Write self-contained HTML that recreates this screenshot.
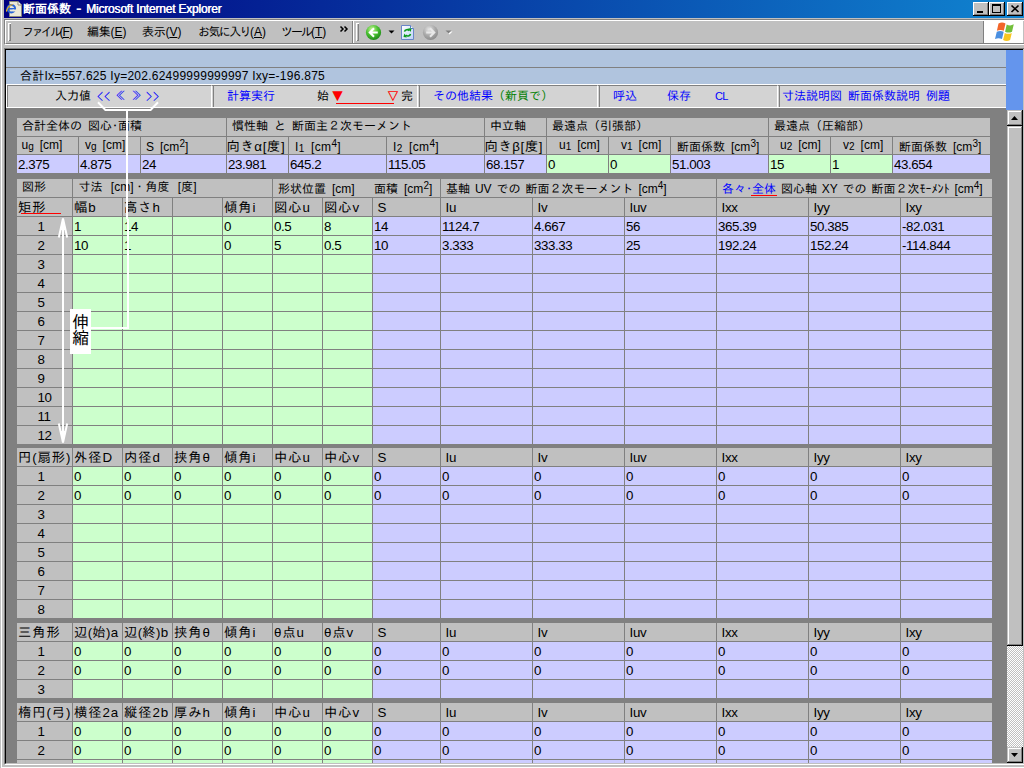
<!DOCTYPE html>
<html lang="ja">
<head>
<meta charset="utf-8">
<title>断面係数 - Microsoft Internet Explorer</title>
<style>
html,body{margin:0;padding:0;}
body{width:1024px;height:768px;overflow:hidden;position:relative;background:#c0c0c0;
 font-family:"Liberation Sans","IPAGothic",sans-serif;font-size:12px;color:#000;}
div,span{box-sizing:border-box;}
.a{position:absolute;}
/* ---- window chrome ---- */
#title{left:4px;top:0;width:1020px;height:18px;background:linear-gradient(to right,#000080 0%,#1084d0 100%);}
#title .t{position:absolute;top:2px;height:14px;line-height:14px;color:#fff;font-weight:bold;font-size:12px;white-space:nowrap;}
.wb{position:absolute;top:2px;width:16px;height:14px;background:#c0c0c0;
 box-shadow:inset -1px -1px 0 #000,inset 1px 1px 0 #fff,inset -2px -2px 0 #808080;}
#rebar{left:4px;top:19px;width:1020px;height:26px;background:#c0c0c0;border-top:1px solid #808080;border-left:1px solid #808080;border-bottom:1px solid #fff;}
#rebar .in{position:absolute;left:0;top:0;right:0;bottom:0;border-top:1px solid #fff;border-left:1px solid #fff;border-bottom:1px solid #808080;}
.grip{position:absolute;top:23px;width:3px;height:18px;background:#c0c0c0;box-shadow:inset 1px 1px 0 #fff,inset -1px -1px 0 #808080;}
.m{position:absolute;top:25px;height:14px;line-height:14px;font-size:12px;white-space:nowrap;}
.m .k{letter-spacing:-2.6px;}
.m u{text-decoration:underline;text-underline-offset:1px;text-decoration-thickness:1px;}
/* ---- page ---- */
#frame{left:4px;top:48px;width:1020px;height:717px;border-top:1px solid #808080;border-left:1px solid #808080;border-bottom:1px solid #fff;background:#c0c0c0;}
#frame2{left:5px;top:49px;width:1018px;height:715px;border-top:1px solid #000;border-left:1px solid #000;border-bottom:1px solid #c0c0c0;background:#808080;}
#doc{left:6px;top:50px;width:1017px;height:713px;overflow:hidden;background:#808080;}
/* coordinates inside #abs are page-absolute (offset compensated) */
#abs{position:absolute;left:-6px;top:-50px;width:1024px;height:768px;}
.band{position:absolute;left:6px;width:1000px;background:#b0c4de;}
.c{position:absolute;overflow:hidden;white-space:nowrap;}
.c>span{position:relative;display:block;}
/* gothic 12px cells */
.g{font-size:12px;line-height:12px;word-spacing:2.7px;}
.g>span{top:2px;}
.g.lo>span{top:4px;}
.p{font-size:13.33px;line-height:15px;}
.p>span{top:2px;}
.v{font-size:13.33px;line-height:15px;letter-spacing:-0.41px;}
.v>span{top:2px;}
.sb{font-size:10px;position:relative;top:0.5px;}
.sp{font-size:10px;position:relative;top:-4px;}
.bl{color:#00f;}
.ru{border-bottom:1px solid #f00;}
.lk{color:#00f;}
</style>
</head>
<body>
<div class="a" style="left:1px;top:0;width:1px;height:768px;background:#fff"></div>
<div class="a" style="left:1px;top:767px;width:1023px;height:1px;background:#fff"></div>
<!-- title bar -->
<div id="title" class="a">
  <svg class="a" style="left:2px;top:1px" width="16" height="16" viewBox="0 0 16 16">
    <path d="M3.500 0.500h8.500l3.500 3.500v11.500h-12z" fill="#ece9d8" stroke="#8a8a7a" stroke-width="1"/>
    <path d="M12 0.500v3.500h3.500" fill="#fff" stroke="#8a8a7a" stroke-width="1"/>
    <ellipse cx="5.300" cy="7.700" rx="3.800" ry="3.700" fill="none" stroke="#2a66d8" stroke-width="2"/>
    <rect x="2" y="7" width="7" height="1.500" fill="#2a66d8"/>
    <rect x="6.500" y="8.500" width="4" height="2" fill="#ece9d8"/>
    <path d="M0.300 10.500c1-4 4-6.500 6.500-7" fill="none" stroke="#e8b020" stroke-width="1.200"/>
  </svg>
  <div class="t" style="left:19px">断面係数</div><div class="t" style="left:72px;transform:scaleX(1.4);transform-origin:0 0">-</div><div class="t" id="tt2" style="left:82px;letter-spacing:-0.2px;font-weight:normal;text-shadow:0.5px 0 0 #fff">Microsoft Internet Explorer</div>
  <div class="wb" style="left:969px"><div class="a" style="left:4px;top:9px;width:6px;height:2px;background:#000"></div></div>
  <div class="wb" style="left:985px"><div class="a" style="left:3px;top:2px;width:9px;height:9px;border:1px solid #000;border-top-width:2px"></div></div>
  <div class="wb" style="left:1003px">
    <svg class="a" style="left:0;top:0" width="16" height="14" viewBox="0 0 16 14"><path d="M4.500 3.500l7 6.500M11.500 3.500l-7 6.500" stroke="#000" stroke-width="1.700" fill="none"/></svg>
  </div>
</div>
<!-- menu / toolbar -->
<div id="rebar" class="a"><div class="in"></div></div>
<div class="grip" style="left:8px"></div>
<div class="m" style="left:22px"><span class="k">ファイル</span><span style="letter-spacing:-1px">(<u>F</u>)</span></div>
<div class="m" style="left:87px"><span style="letter-spacing:-0.3px">編集</span>(<u>E</u>)</div>
<div class="m" style="left:142px"><span style="letter-spacing:-0.3px">表示</span>(<u>V</u>)</div>
<div class="m" style="left:198px"><span style="letter-spacing:-1.6px">お気に入り</span>(<u>A</u>)</div>
<div class="m" style="left:281px"><span class="k" style="letter-spacing:-2px">ツール</span>(<u>T</u>)</div>
<svg class="a" style="left:339px;top:25px" width="10" height="8" viewBox="0 0 10 8"><path d="M1.500 1.500l2.500 2.500l-2.500 2.500M5.500 1.500l2.500 2.500l-2.500 2.500" stroke="#000" stroke-width="1.500" fill="none"/></svg>
<div class="a" style="left:352px;top:21px;width:1px;height:22px;background:#808080"></div>
<div class="a" style="left:353px;top:21px;width:1px;height:22px;background:#fff"></div>
<div class="grip" style="left:356px"></div>
<!-- toolbar icons -->
<svg class="a" style="left:365px;top:24px" width="92" height="17" viewBox="0 0 92 17">
  <defs>
    <radialGradient id="gg" cx="40%" cy="30%" r="70%"><stop offset="0" stop-color="#ccf89a"/><stop offset="0.550" stop-color="#48c030"/><stop offset="1" stop-color="#1e8a18"/></radialGradient>
    <radialGradient id="gr" cx="40%" cy="30%" r="70%"><stop offset="0" stop-color="#e4e4e4"/><stop offset="0.600" stop-color="#a8a8a8"/><stop offset="1" stop-color="#8c8c8c"/></radialGradient>
  </defs>
  <circle cx="8.500" cy="8.500" r="7.600" fill="url(#gg)"/>
  <path d="M12.800 8.500H5M9 4.300L4.800 8.500L9 12.700" fill="none" stroke="#fff" stroke-width="2.100"/>
  <path d="M23.500 6.500h6l-3 3z" fill="#000"/>
  <linearGradient id="pg" x1="0" y1="0" x2="1" y2="1"><stop offset="0" stop-color="#fff"/><stop offset="1" stop-color="#bcd4f6"/></linearGradient><path d="M36.500 1.500h9l3 3v11h-12z" fill="url(#pg)" stroke="#6a86c8" stroke-width="1"/>
  <path d="M45.500 1.500v3h3" fill="#fff" stroke="#5a7fc4" stroke-width="1"/>
  <path d="M39.500 7.600c0.500-2.200 3.500-2.600 5-1" fill="none" stroke="#0a9a1a" stroke-width="1.600"/><path d="M43.200 4.200l3.300 0.300l-0.800 3.500z" fill="#0a9a1a"/><path d="M45.500 10c-0.500 2.200-3.500 2.600-5 1" fill="none" stroke="#0a9a1a" stroke-width="1.600"/><path d="M41.800 13.400l-3.300-0.300l0.800-3.500z" fill="#0a9a1a"/>
  <circle cx="65.500" cy="8.500" r="7.600" fill="url(#gr)"/>
  <path d="M61.200 8.500H69M65 4.300L69.200 8.500L65 12.700" fill="none" stroke="#e8e8e8" stroke-width="2.100"/>
  <path d="M81.500 7.500h6l-3 3z" fill="#fff"/>
  <path d="M80.500 6.500h6l-3 3z" fill="#808080"/>
</svg>
<!-- logo box -->
<div class="a" style="left:983px;top:21px;width:1px;height:22px;background:#808080"></div>
<div class="a" style="left:984px;top:20px;width:39px;height:23px;background:#fff"></div>
<svg class="a" style="left:994.500px;top:22px" width="22" height="20" viewBox="0 0 22 20">
  <path d="M3.500 1.500c2.500-1.200 4.500-1.200 7 0l-1.700 7.300c-2.300-1-4.400-1-6.900 0z" fill="#f2662a"/>
  <path d="M11.700 2.500c2.500 1.200 4.600 1.200 7.100-0.200l-1.800 7.400c-2.300 1.200-4.500 1.200-6.900 0z" fill="#73bf3b"/>
  <path d="M1.800 9.800c2.400-1.100 4.500-1.100 6.900 0l-1.700 7.200c-2.400-1.100-4.600-1.100-7 0z" fill="#4a8fe0"/>
  <path d="M9.800 10.900c2.400 1.200 4.600 1.200 7 0l-1.700 7.200c-2.400 1.300-4.600 1.300-7 0z" fill="#f8c620"/>
</svg>
<!-- browser frame -->
<div id="frame" class="a"></div>
<div id="frame2" class="a"></div>
<div id="doc" class="a"><div id="abs">
  <div class="band" style="top:50px;height:17px"></div>
  <div class="a" style="left:6px;top:67px;width:1000px;height:1px;background:#808080"></div>
  <div class="band" style="top:68px;height:16px"></div>
  <div class="a" id="sum" style="left:20px;top:69px;height:14px;line-height:14px;font-size:12px;white-space:nowrap;letter-spacing:0.25px">合計Ix=557.625 Iy=202.62499999999997 Ixy=-196.875</div>
  <!-- command band (table border=1) -->
  <div class="a" style="left:6px;top:84px;width:1000px;height:24px;background:#fff"></div>
  <div class="a" style="left:7px;top:85px;width:999px;height:22px;background:#d3d3d3;border-top:1px solid #808080"></div>
  <div class="a bx" style="left:7px;width:205px"></div>
  <div class="a bx" style="left:213px;width:205px"></div>
  <div class="a bx" style="left:419px;width:179px"></div>
  <div class="a bx" style="left:599px;width:179px"></div>
  <div class="a bx" style="left:779px;width:240px"></div>
  <div class="a" style="left:1006px;top:50px;width:17px;height:60px;background:#6495ed"></div>
  <div class="a tx" style="left:55px">入力値</div>
  <div class="a tx lk" style="left:97px;font-family:IPAGothic,'Liberation Sans',sans-serif;font-size:12px;letter-spacing:1px">&lt;&lt;</div>
  <div class="a tx lk" style="left:115.500px;font-size:10px">≪</div>
  <div class="a tx lk" style="left:131.500px;font-size:10px">≫</div>
  <div class="a tx lk" style="left:146px;font-family:IPAGothic,'Liberation Sans',sans-serif;font-size:12px;letter-spacing:1px">&gt;&gt;</div>
  <div class="a tx lk" style="left:227px">計算実行</div>
  <div class="a tx" style="left:317px">始</div>
  <div class="a tx" style="left:401px">完</div>
  <div class="a tx" style="left:331px;color:#f00;font-family:IPAGothic,sans-serif;font-size:13px;top:91px">▼</div>
  <div class="a tx" style="left:386.500px;color:#f00;font-family:IPAGothic,sans-serif;font-size:13px;top:91px">▽</div>
  <div class="a" style="left:336px;top:103px;width:58px;height:1px;background:#f00"></div>
  <div class="a tx lk" style="left:433px">その他結果<span style="color:#008000">（新頁で）</span></div>
  <div class="a tx lk" style="left:613px">呼込</div>
  <div class="a tx lk" style="left:667px">保存</div>
  <div class="a tx lk" style="left:715px;font-size:11px;letter-spacing:-0.600px">CL</div>
  <div class="a tx lk" style="left:782px">寸法説明図</div>
  <div class="a tx lk" style="left:848px">断面係数説明</div>
  <div class="a tx lk" style="left:926px">例題</div>
<div class="c g" style="left:17px;top:118px;width:209px;height:18px;background:#c0c0c0;padding-left:5px;"><span>合計全体の 図心･面積</span></div>
<div class="c g" style="left:227px;top:118px;width:257px;height:18px;background:#c0c0c0;padding-left:5px;"><span>慣性軸 と 断面主２次モーメント</span></div>
<div class="c g" style="left:485px;top:118px;width:61px;height:18px;background:#c0c0c0;padding-left:5px;"><span>中立軸</span></div>
<div class="c g" style="left:547px;top:118px;width:221px;height:18px;background:#c0c0c0;padding-left:5px;"><span>最遠点（引張部）</span></div>
<div class="c g" style="left:769px;top:118px;width:221px;height:18px;background:#c0c0c0;padding-left:5px;"><span>最遠点（圧縮部）</span></div>
<div class="c g" style="left:17px;top:137px;width:61px;height:17px;background:#c0c0c0;padding-left:4.5px;"><span>u<span class="sb">g</span> [cm]</span></div>
<div class="c g" style="left:79px;top:137px;width:61px;height:17px;background:#c0c0c0;padding-left:6px;"><span>v<span class="sb">g</span> [cm]</span></div>
<div class="c g lo" style="left:141px;top:137px;width:85px;height:17px;background:#c0c0c0;padding-left:5px;"><span>S [cm<span class="sp">2</span>]</span></div>
<div class="c p" style="left:227px;top:137px;width:61px;height:17px;background:#c0c0c0;padding-left:0px;"><span><span style="letter-spacing:0.6px;margin-left:-0.5px">向きα[度]</span></span></div>
<div class="c g lo" style="left:289px;top:137px;width:97px;height:17px;background:#c0c0c0;padding-left:6px;"><span><span style="letter-spacing:0.35px">I<span class="sb">1</span> [cm<span class="sp">4</span>]</span></span></div>
<div class="c g lo" style="left:387px;top:137px;width:97px;height:17px;background:#c0c0c0;padding-left:6px;"><span><span style="letter-spacing:0.35px">I<span class="sb">2</span> [cm<span class="sp">4</span>]</span></span></div>
<div class="c p" style="left:485px;top:137px;width:61px;height:17px;background:#c0c0c0;padding-left:0px;"><span><span style="letter-spacing:0.6px;margin-left:-0.5px">向きβ[度]</span></span></div>
<div class="c g" style="left:547px;top:137px;width:61px;height:17px;background:#c0c0c0;padding-left:12px;"><span>u<span class="sb">1</span> [cm]</span></div>
<div class="c g" style="left:609px;top:137px;width:61px;height:17px;background:#c0c0c0;padding-left:12px;"><span>v<span class="sb">1</span> [cm]</span></div>
<div class="c g lo" style="left:671px;top:137px;width:97px;height:17px;background:#c0c0c0;padding-left:6px;"><span>断面係数 [cm<span class="sp">3</span>]</span></div>
<div class="c g" style="left:769px;top:137px;width:61px;height:17px;background:#c0c0c0;padding-left:11px;"><span>u<span class="sb">2</span> [cm]</span></div>
<div class="c g" style="left:831px;top:137px;width:61px;height:17px;background:#c0c0c0;padding-left:12px;"><span>v<span class="sb">2</span> [cm]</span></div>
<div class="c g lo" style="left:893px;top:137px;width:97px;height:17px;background:#c0c0c0;padding-left:6px;"><span>断面係数 [cm<span class="sp">3</span>]</span></div>
<div class="c v" style="left:17px;top:155px;width:61px;height:18px;background:#ccccff;padding-left:1px;"><span>2.375</span></div>
<div class="c v" style="left:79px;top:155px;width:61px;height:18px;background:#ccccff;padding-left:1px;"><span>4.875</span></div>
<div class="c v" style="left:141px;top:155px;width:85px;height:18px;background:#ccccff;padding-left:1px;"><span>24</span></div>
<div class="c v" style="left:227px;top:155px;width:61px;height:18px;background:#ccccff;padding-left:1px;"><span>23.981</span></div>
<div class="c v" style="left:289px;top:155px;width:97px;height:18px;background:#ccccff;padding-left:1px;"><span>645.2</span></div>
<div class="c v" style="left:387px;top:155px;width:97px;height:18px;background:#ccccff;padding-left:1px;"><span>115.05</span></div>
<div class="c v" style="left:485px;top:155px;width:61px;height:18px;background:#ccccff;padding-left:1px;"><span>68.157</span></div>
<div class="c v" style="left:547px;top:155px;width:61px;height:18px;background:#ccffcc;padding-left:1px;"><span>0</span></div>
<div class="c v" style="left:609px;top:155px;width:61px;height:18px;background:#ccffcc;padding-left:1px;"><span>0</span></div>
<div class="c v" style="left:671px;top:155px;width:97px;height:18px;background:#ccccff;padding-left:1px;"><span>51.003</span></div>
<div class="c v" style="left:769px;top:155px;width:61px;height:18px;background:#ccffcc;padding-left:1px;"><span>15</span></div>
<div class="c v" style="left:831px;top:155px;width:61px;height:18px;background:#ccffcc;padding-left:1px;"><span>1</span></div>
<div class="c v" style="left:893px;top:155px;width:97px;height:18px;background:#ccccff;padding-left:1px;"><span>43.654</span></div>
<div class="c g" style="left:17px;top:179px;width:55px;height:18px;background:#c0c0c0;padding-left:5px;"><span>図形</span></div>
<div class="c g" style="left:73px;top:179px;width:199px;height:18px;background:#c0c0c0;padding-left:5.5px;"><span style="word-spacing:5px">寸法 [cm]・角度 [度]</span></div>
<div class="c g lo" style="left:273px;top:179px;width:167px;height:18px;background:#c0c0c0;padding-left:5px;"><span>形状位置 [cm]</span><span style="position:absolute;left:101px;top:4px">面積 [cm<span class="sp">2</span>]</span></div>
<div class="c g lo" style="left:441px;top:179px;width:275px;height:18px;background:#c0c0c0;padding-left:5px;"><span style="word-spacing:1.6px">基軸 UV での 断面２次モーメント [cm<span class="sp">4</span>]</span></div>
<div class="c g lo" style="left:717px;top:179px;width:275px;height:18px;background:#c0c0c0;padding-left:5px;"><span style="word-spacing:1.6px"><span class="bl">各々･全体</span> 図心軸 XY での 断面２次ﾓｰﾒﾝﾄ [cm<span class="sp">4</span>]</span></div>
<div class="c p h" style="left:17px;top:198px;width:55px;height:18px;background:#c0c0c0;padding-left:1px;"><span style="letter-spacing:0.9px">矩形</span></div>
<div class="c p h" style="left:73px;top:198px;width:49px;height:18px;background:#c0c0c0;padding-left:1px;"><span style="letter-spacing:0.9px">幅b</span></div>
<div class="c p h" style="left:123px;top:198px;width:49px;height:18px;background:#c0c0c0;padding-left:1px;"><span style="letter-spacing:0.9px">高さh</span></div>
<div class="c p h" style="left:173px;top:198px;width:49px;height:18px;background:#c0c0c0;padding-left:1px;"></div>
<div class="c p h" style="left:223px;top:198px;width:49px;height:18px;background:#c0c0c0;padding-left:1px;"><span style="letter-spacing:0.9px">傾角i</span></div>
<div class="c p h" style="left:273px;top:198px;width:49px;height:18px;background:#c0c0c0;padding-left:1px;"><span style="letter-spacing:0.9px">図心u</span></div>
<div class="c p h" style="left:323px;top:198px;width:49px;height:18px;background:#c0c0c0;padding-left:1px;"><span style="letter-spacing:0.9px">図心v</span></div>
<div class="c v h" style="left:373px;top:198px;width:67px;height:18px;background:#c0c0c0;padding-left:4.6px;"><span>S</span></div>
<div class="c v h" style="left:441px;top:198px;width:91px;height:18px;background:#c0c0c0;padding-left:4.6px;"><span>Iu</span></div>
<div class="c v h" style="left:533px;top:198px;width:91px;height:18px;background:#c0c0c0;padding-left:4.6px;"><span>Iv</span></div>
<div class="c v h" style="left:625px;top:198px;width:91px;height:18px;background:#c0c0c0;padding-left:4.6px;"><span>Iuv</span></div>
<div class="c v h" style="left:717px;top:198px;width:91px;height:18px;background:#c0c0c0;padding-left:4.6px;"><span>Ixx</span></div>
<div class="c v h" style="left:809px;top:198px;width:91px;height:18px;background:#c0c0c0;padding-left:4.6px;"><span>Iyy</span></div>
<div class="c v h" style="left:901px;top:198px;width:91px;height:18px;background:#c0c0c0;padding-left:4.6px;"><span>Ixy</span></div>
<div class="c v" style="left:17px;top:217px;width:55px;height:18px;background:#c0c0c0;padding-left:20.5px;"><span>1</span></div>
<div class="c v" style="left:73px;top:217px;width:49px;height:18px;background:#ccffcc;padding-left:1px;"><span>1</span></div>
<div class="c v" style="left:123px;top:217px;width:49px;height:18px;background:#ccffcc;padding-left:1px;"><span>14</span></div>
<div class="c v" style="left:173px;top:217px;width:49px;height:18px;background:#ccffcc;padding-left:1px;"></div>
<div class="c v" style="left:223px;top:217px;width:49px;height:18px;background:#ccffcc;padding-left:1px;"><span>0</span></div>
<div class="c v" style="left:273px;top:217px;width:49px;height:18px;background:#ccffcc;padding-left:1px;"><span>0.5</span></div>
<div class="c v" style="left:323px;top:217px;width:49px;height:18px;background:#ccffcc;padding-left:1px;"><span>8</span></div>
<div class="c v" style="left:373px;top:217px;width:67px;height:18px;background:#ccccff;padding-left:1px;"><span>14</span></div>
<div class="c v" style="left:441px;top:217px;width:91px;height:18px;background:#ccccff;padding-left:1px;"><span>1124.7</span></div>
<div class="c v" style="left:533px;top:217px;width:91px;height:18px;background:#ccccff;padding-left:1px;"><span>4.667</span></div>
<div class="c v" style="left:625px;top:217px;width:91px;height:18px;background:#ccccff;padding-left:1px;"><span>56</span></div>
<div class="c v" style="left:717px;top:217px;width:91px;height:18px;background:#ccccff;padding-left:1px;"><span>365.39</span></div>
<div class="c v" style="left:809px;top:217px;width:91px;height:18px;background:#ccccff;padding-left:1px;"><span>50.385</span></div>
<div class="c v" style="left:901px;top:217px;width:91px;height:18px;background:#ccccff;padding-left:1px;"><span>-82.031</span></div>
<div class="c v" style="left:17px;top:236px;width:55px;height:18px;background:#c0c0c0;padding-left:20.5px;"><span>2</span></div>
<div class="c v" style="left:73px;top:236px;width:49px;height:18px;background:#ccffcc;padding-left:1px;"><span>10</span></div>
<div class="c v" style="left:123px;top:236px;width:49px;height:18px;background:#ccffcc;padding-left:1px;"><span>1</span></div>
<div class="c v" style="left:173px;top:236px;width:49px;height:18px;background:#ccffcc;padding-left:1px;"></div>
<div class="c v" style="left:223px;top:236px;width:49px;height:18px;background:#ccffcc;padding-left:1px;"><span>0</span></div>
<div class="c v" style="left:273px;top:236px;width:49px;height:18px;background:#ccffcc;padding-left:1px;"><span>5</span></div>
<div class="c v" style="left:323px;top:236px;width:49px;height:18px;background:#ccffcc;padding-left:1px;"><span>0.5</span></div>
<div class="c v" style="left:373px;top:236px;width:67px;height:18px;background:#ccccff;padding-left:1px;"><span>10</span></div>
<div class="c v" style="left:441px;top:236px;width:91px;height:18px;background:#ccccff;padding-left:1px;"><span>3.333</span></div>
<div class="c v" style="left:533px;top:236px;width:91px;height:18px;background:#ccccff;padding-left:1px;"><span>333.33</span></div>
<div class="c v" style="left:625px;top:236px;width:91px;height:18px;background:#ccccff;padding-left:1px;"><span>25</span></div>
<div class="c v" style="left:717px;top:236px;width:91px;height:18px;background:#ccccff;padding-left:1px;"><span>192.24</span></div>
<div class="c v" style="left:809px;top:236px;width:91px;height:18px;background:#ccccff;padding-left:1px;"><span>152.24</span></div>
<div class="c v" style="left:901px;top:236px;width:91px;height:18px;background:#ccccff;padding-left:1px;"><span>-114.844</span></div>
<div class="c v" style="left:17px;top:255px;width:55px;height:18px;background:#c0c0c0;padding-left:20.5px;"><span>3</span></div>
<div class="c v" style="left:73px;top:255px;width:49px;height:18px;background:#ccffcc;padding-left:1px;"></div>
<div class="c v" style="left:123px;top:255px;width:49px;height:18px;background:#ccffcc;padding-left:1px;"></div>
<div class="c v" style="left:173px;top:255px;width:49px;height:18px;background:#ccffcc;padding-left:1px;"></div>
<div class="c v" style="left:223px;top:255px;width:49px;height:18px;background:#ccffcc;padding-left:1px;"></div>
<div class="c v" style="left:273px;top:255px;width:49px;height:18px;background:#ccffcc;padding-left:1px;"></div>
<div class="c v" style="left:323px;top:255px;width:49px;height:18px;background:#ccffcc;padding-left:1px;"></div>
<div class="c v" style="left:373px;top:255px;width:67px;height:18px;background:#ccccff;padding-left:1px;"></div>
<div class="c v" style="left:441px;top:255px;width:91px;height:18px;background:#ccccff;padding-left:1px;"></div>
<div class="c v" style="left:533px;top:255px;width:91px;height:18px;background:#ccccff;padding-left:1px;"></div>
<div class="c v" style="left:625px;top:255px;width:91px;height:18px;background:#ccccff;padding-left:1px;"></div>
<div class="c v" style="left:717px;top:255px;width:91px;height:18px;background:#ccccff;padding-left:1px;"></div>
<div class="c v" style="left:809px;top:255px;width:91px;height:18px;background:#ccccff;padding-left:1px;"></div>
<div class="c v" style="left:901px;top:255px;width:91px;height:18px;background:#ccccff;padding-left:1px;"></div>
<div class="c v" style="left:17px;top:274px;width:55px;height:18px;background:#c0c0c0;padding-left:20.5px;"><span>4</span></div>
<div class="c v" style="left:73px;top:274px;width:49px;height:18px;background:#ccffcc;padding-left:1px;"></div>
<div class="c v" style="left:123px;top:274px;width:49px;height:18px;background:#ccffcc;padding-left:1px;"></div>
<div class="c v" style="left:173px;top:274px;width:49px;height:18px;background:#ccffcc;padding-left:1px;"></div>
<div class="c v" style="left:223px;top:274px;width:49px;height:18px;background:#ccffcc;padding-left:1px;"></div>
<div class="c v" style="left:273px;top:274px;width:49px;height:18px;background:#ccffcc;padding-left:1px;"></div>
<div class="c v" style="left:323px;top:274px;width:49px;height:18px;background:#ccffcc;padding-left:1px;"></div>
<div class="c v" style="left:373px;top:274px;width:67px;height:18px;background:#ccccff;padding-left:1px;"></div>
<div class="c v" style="left:441px;top:274px;width:91px;height:18px;background:#ccccff;padding-left:1px;"></div>
<div class="c v" style="left:533px;top:274px;width:91px;height:18px;background:#ccccff;padding-left:1px;"></div>
<div class="c v" style="left:625px;top:274px;width:91px;height:18px;background:#ccccff;padding-left:1px;"></div>
<div class="c v" style="left:717px;top:274px;width:91px;height:18px;background:#ccccff;padding-left:1px;"></div>
<div class="c v" style="left:809px;top:274px;width:91px;height:18px;background:#ccccff;padding-left:1px;"></div>
<div class="c v" style="left:901px;top:274px;width:91px;height:18px;background:#ccccff;padding-left:1px;"></div>
<div class="c v" style="left:17px;top:293px;width:55px;height:18px;background:#c0c0c0;padding-left:20.5px;"><span>5</span></div>
<div class="c v" style="left:73px;top:293px;width:49px;height:18px;background:#ccffcc;padding-left:1px;"></div>
<div class="c v" style="left:123px;top:293px;width:49px;height:18px;background:#ccffcc;padding-left:1px;"></div>
<div class="c v" style="left:173px;top:293px;width:49px;height:18px;background:#ccffcc;padding-left:1px;"></div>
<div class="c v" style="left:223px;top:293px;width:49px;height:18px;background:#ccffcc;padding-left:1px;"></div>
<div class="c v" style="left:273px;top:293px;width:49px;height:18px;background:#ccffcc;padding-left:1px;"></div>
<div class="c v" style="left:323px;top:293px;width:49px;height:18px;background:#ccffcc;padding-left:1px;"></div>
<div class="c v" style="left:373px;top:293px;width:67px;height:18px;background:#ccccff;padding-left:1px;"></div>
<div class="c v" style="left:441px;top:293px;width:91px;height:18px;background:#ccccff;padding-left:1px;"></div>
<div class="c v" style="left:533px;top:293px;width:91px;height:18px;background:#ccccff;padding-left:1px;"></div>
<div class="c v" style="left:625px;top:293px;width:91px;height:18px;background:#ccccff;padding-left:1px;"></div>
<div class="c v" style="left:717px;top:293px;width:91px;height:18px;background:#ccccff;padding-left:1px;"></div>
<div class="c v" style="left:809px;top:293px;width:91px;height:18px;background:#ccccff;padding-left:1px;"></div>
<div class="c v" style="left:901px;top:293px;width:91px;height:18px;background:#ccccff;padding-left:1px;"></div>
<div class="c v" style="left:17px;top:312px;width:55px;height:18px;background:#c0c0c0;padding-left:20.5px;"><span>6</span></div>
<div class="c v" style="left:73px;top:312px;width:49px;height:18px;background:#ccffcc;padding-left:1px;"></div>
<div class="c v" style="left:123px;top:312px;width:49px;height:18px;background:#ccffcc;padding-left:1px;"></div>
<div class="c v" style="left:173px;top:312px;width:49px;height:18px;background:#ccffcc;padding-left:1px;"></div>
<div class="c v" style="left:223px;top:312px;width:49px;height:18px;background:#ccffcc;padding-left:1px;"></div>
<div class="c v" style="left:273px;top:312px;width:49px;height:18px;background:#ccffcc;padding-left:1px;"></div>
<div class="c v" style="left:323px;top:312px;width:49px;height:18px;background:#ccffcc;padding-left:1px;"></div>
<div class="c v" style="left:373px;top:312px;width:67px;height:18px;background:#ccccff;padding-left:1px;"></div>
<div class="c v" style="left:441px;top:312px;width:91px;height:18px;background:#ccccff;padding-left:1px;"></div>
<div class="c v" style="left:533px;top:312px;width:91px;height:18px;background:#ccccff;padding-left:1px;"></div>
<div class="c v" style="left:625px;top:312px;width:91px;height:18px;background:#ccccff;padding-left:1px;"></div>
<div class="c v" style="left:717px;top:312px;width:91px;height:18px;background:#ccccff;padding-left:1px;"></div>
<div class="c v" style="left:809px;top:312px;width:91px;height:18px;background:#ccccff;padding-left:1px;"></div>
<div class="c v" style="left:901px;top:312px;width:91px;height:18px;background:#ccccff;padding-left:1px;"></div>
<div class="c v" style="left:17px;top:331px;width:55px;height:18px;background:#c0c0c0;padding-left:20.5px;"><span>7</span></div>
<div class="c v" style="left:73px;top:331px;width:49px;height:18px;background:#ccffcc;padding-left:1px;"></div>
<div class="c v" style="left:123px;top:331px;width:49px;height:18px;background:#ccffcc;padding-left:1px;"></div>
<div class="c v" style="left:173px;top:331px;width:49px;height:18px;background:#ccffcc;padding-left:1px;"></div>
<div class="c v" style="left:223px;top:331px;width:49px;height:18px;background:#ccffcc;padding-left:1px;"></div>
<div class="c v" style="left:273px;top:331px;width:49px;height:18px;background:#ccffcc;padding-left:1px;"></div>
<div class="c v" style="left:323px;top:331px;width:49px;height:18px;background:#ccffcc;padding-left:1px;"></div>
<div class="c v" style="left:373px;top:331px;width:67px;height:18px;background:#ccccff;padding-left:1px;"></div>
<div class="c v" style="left:441px;top:331px;width:91px;height:18px;background:#ccccff;padding-left:1px;"></div>
<div class="c v" style="left:533px;top:331px;width:91px;height:18px;background:#ccccff;padding-left:1px;"></div>
<div class="c v" style="left:625px;top:331px;width:91px;height:18px;background:#ccccff;padding-left:1px;"></div>
<div class="c v" style="left:717px;top:331px;width:91px;height:18px;background:#ccccff;padding-left:1px;"></div>
<div class="c v" style="left:809px;top:331px;width:91px;height:18px;background:#ccccff;padding-left:1px;"></div>
<div class="c v" style="left:901px;top:331px;width:91px;height:18px;background:#ccccff;padding-left:1px;"></div>
<div class="c v" style="left:17px;top:350px;width:55px;height:18px;background:#c0c0c0;padding-left:20.5px;"><span>8</span></div>
<div class="c v" style="left:73px;top:350px;width:49px;height:18px;background:#ccffcc;padding-left:1px;"></div>
<div class="c v" style="left:123px;top:350px;width:49px;height:18px;background:#ccffcc;padding-left:1px;"></div>
<div class="c v" style="left:173px;top:350px;width:49px;height:18px;background:#ccffcc;padding-left:1px;"></div>
<div class="c v" style="left:223px;top:350px;width:49px;height:18px;background:#ccffcc;padding-left:1px;"></div>
<div class="c v" style="left:273px;top:350px;width:49px;height:18px;background:#ccffcc;padding-left:1px;"></div>
<div class="c v" style="left:323px;top:350px;width:49px;height:18px;background:#ccffcc;padding-left:1px;"></div>
<div class="c v" style="left:373px;top:350px;width:67px;height:18px;background:#ccccff;padding-left:1px;"></div>
<div class="c v" style="left:441px;top:350px;width:91px;height:18px;background:#ccccff;padding-left:1px;"></div>
<div class="c v" style="left:533px;top:350px;width:91px;height:18px;background:#ccccff;padding-left:1px;"></div>
<div class="c v" style="left:625px;top:350px;width:91px;height:18px;background:#ccccff;padding-left:1px;"></div>
<div class="c v" style="left:717px;top:350px;width:91px;height:18px;background:#ccccff;padding-left:1px;"></div>
<div class="c v" style="left:809px;top:350px;width:91px;height:18px;background:#ccccff;padding-left:1px;"></div>
<div class="c v" style="left:901px;top:350px;width:91px;height:18px;background:#ccccff;padding-left:1px;"></div>
<div class="c v" style="left:17px;top:369px;width:55px;height:18px;background:#c0c0c0;padding-left:20.5px;"><span>9</span></div>
<div class="c v" style="left:73px;top:369px;width:49px;height:18px;background:#ccffcc;padding-left:1px;"></div>
<div class="c v" style="left:123px;top:369px;width:49px;height:18px;background:#ccffcc;padding-left:1px;"></div>
<div class="c v" style="left:173px;top:369px;width:49px;height:18px;background:#ccffcc;padding-left:1px;"></div>
<div class="c v" style="left:223px;top:369px;width:49px;height:18px;background:#ccffcc;padding-left:1px;"></div>
<div class="c v" style="left:273px;top:369px;width:49px;height:18px;background:#ccffcc;padding-left:1px;"></div>
<div class="c v" style="left:323px;top:369px;width:49px;height:18px;background:#ccffcc;padding-left:1px;"></div>
<div class="c v" style="left:373px;top:369px;width:67px;height:18px;background:#ccccff;padding-left:1px;"></div>
<div class="c v" style="left:441px;top:369px;width:91px;height:18px;background:#ccccff;padding-left:1px;"></div>
<div class="c v" style="left:533px;top:369px;width:91px;height:18px;background:#ccccff;padding-left:1px;"></div>
<div class="c v" style="left:625px;top:369px;width:91px;height:18px;background:#ccccff;padding-left:1px;"></div>
<div class="c v" style="left:717px;top:369px;width:91px;height:18px;background:#ccccff;padding-left:1px;"></div>
<div class="c v" style="left:809px;top:369px;width:91px;height:18px;background:#ccccff;padding-left:1px;"></div>
<div class="c v" style="left:901px;top:369px;width:91px;height:18px;background:#ccccff;padding-left:1px;"></div>
<div class="c v" style="left:17px;top:388px;width:55px;height:18px;background:#c0c0c0;padding-left:20.5px;"><span>10</span></div>
<div class="c v" style="left:73px;top:388px;width:49px;height:18px;background:#ccffcc;padding-left:1px;"></div>
<div class="c v" style="left:123px;top:388px;width:49px;height:18px;background:#ccffcc;padding-left:1px;"></div>
<div class="c v" style="left:173px;top:388px;width:49px;height:18px;background:#ccffcc;padding-left:1px;"></div>
<div class="c v" style="left:223px;top:388px;width:49px;height:18px;background:#ccffcc;padding-left:1px;"></div>
<div class="c v" style="left:273px;top:388px;width:49px;height:18px;background:#ccffcc;padding-left:1px;"></div>
<div class="c v" style="left:323px;top:388px;width:49px;height:18px;background:#ccffcc;padding-left:1px;"></div>
<div class="c v" style="left:373px;top:388px;width:67px;height:18px;background:#ccccff;padding-left:1px;"></div>
<div class="c v" style="left:441px;top:388px;width:91px;height:18px;background:#ccccff;padding-left:1px;"></div>
<div class="c v" style="left:533px;top:388px;width:91px;height:18px;background:#ccccff;padding-left:1px;"></div>
<div class="c v" style="left:625px;top:388px;width:91px;height:18px;background:#ccccff;padding-left:1px;"></div>
<div class="c v" style="left:717px;top:388px;width:91px;height:18px;background:#ccccff;padding-left:1px;"></div>
<div class="c v" style="left:809px;top:388px;width:91px;height:18px;background:#ccccff;padding-left:1px;"></div>
<div class="c v" style="left:901px;top:388px;width:91px;height:18px;background:#ccccff;padding-left:1px;"></div>
<div class="c v" style="left:17px;top:407px;width:55px;height:18px;background:#c0c0c0;padding-left:20.5px;"><span>11</span></div>
<div class="c v" style="left:73px;top:407px;width:49px;height:18px;background:#ccffcc;padding-left:1px;"></div>
<div class="c v" style="left:123px;top:407px;width:49px;height:18px;background:#ccffcc;padding-left:1px;"></div>
<div class="c v" style="left:173px;top:407px;width:49px;height:18px;background:#ccffcc;padding-left:1px;"></div>
<div class="c v" style="left:223px;top:407px;width:49px;height:18px;background:#ccffcc;padding-left:1px;"></div>
<div class="c v" style="left:273px;top:407px;width:49px;height:18px;background:#ccffcc;padding-left:1px;"></div>
<div class="c v" style="left:323px;top:407px;width:49px;height:18px;background:#ccffcc;padding-left:1px;"></div>
<div class="c v" style="left:373px;top:407px;width:67px;height:18px;background:#ccccff;padding-left:1px;"></div>
<div class="c v" style="left:441px;top:407px;width:91px;height:18px;background:#ccccff;padding-left:1px;"></div>
<div class="c v" style="left:533px;top:407px;width:91px;height:18px;background:#ccccff;padding-left:1px;"></div>
<div class="c v" style="left:625px;top:407px;width:91px;height:18px;background:#ccccff;padding-left:1px;"></div>
<div class="c v" style="left:717px;top:407px;width:91px;height:18px;background:#ccccff;padding-left:1px;"></div>
<div class="c v" style="left:809px;top:407px;width:91px;height:18px;background:#ccccff;padding-left:1px;"></div>
<div class="c v" style="left:901px;top:407px;width:91px;height:18px;background:#ccccff;padding-left:1px;"></div>
<div class="c v" style="left:17px;top:426px;width:55px;height:18px;background:#c0c0c0;padding-left:20.5px;"><span>12</span></div>
<div class="c v" style="left:73px;top:426px;width:49px;height:18px;background:#ccffcc;padding-left:1px;"></div>
<div class="c v" style="left:123px;top:426px;width:49px;height:18px;background:#ccffcc;padding-left:1px;"></div>
<div class="c v" style="left:173px;top:426px;width:49px;height:18px;background:#ccffcc;padding-left:1px;"></div>
<div class="c v" style="left:223px;top:426px;width:49px;height:18px;background:#ccffcc;padding-left:1px;"></div>
<div class="c v" style="left:273px;top:426px;width:49px;height:18px;background:#ccffcc;padding-left:1px;"></div>
<div class="c v" style="left:323px;top:426px;width:49px;height:18px;background:#ccffcc;padding-left:1px;"></div>
<div class="c v" style="left:373px;top:426px;width:67px;height:18px;background:#ccccff;padding-left:1px;"></div>
<div class="c v" style="left:441px;top:426px;width:91px;height:18px;background:#ccccff;padding-left:1px;"></div>
<div class="c v" style="left:533px;top:426px;width:91px;height:18px;background:#ccccff;padding-left:1px;"></div>
<div class="c v" style="left:625px;top:426px;width:91px;height:18px;background:#ccccff;padding-left:1px;"></div>
<div class="c v" style="left:717px;top:426px;width:91px;height:18px;background:#ccccff;padding-left:1px;"></div>
<div class="c v" style="left:809px;top:426px;width:91px;height:18px;background:#ccccff;padding-left:1px;"></div>
<div class="c v" style="left:901px;top:426px;width:91px;height:18px;background:#ccccff;padding-left:1px;"></div>
<div class="c p h" style="left:17px;top:448px;width:55px;height:18px;background:#c0c0c0;padding-left:1px;"><span style="letter-spacing:0.9px">円(扇形)</span></div>
<div class="c p h" style="left:73px;top:448px;width:49px;height:18px;background:#c0c0c0;padding-left:1px;"><span style="letter-spacing:0.9px">外径D</span></div>
<div class="c p h" style="left:123px;top:448px;width:49px;height:18px;background:#c0c0c0;padding-left:1px;"><span style="letter-spacing:0.9px">内径d</span></div>
<div class="c p h" style="left:173px;top:448px;width:49px;height:18px;background:#c0c0c0;padding-left:1px;"><span style="letter-spacing:0.9px">挟角θ</span></div>
<div class="c p h" style="left:223px;top:448px;width:49px;height:18px;background:#c0c0c0;padding-left:1px;"><span style="letter-spacing:0.9px">傾角i</span></div>
<div class="c p h" style="left:273px;top:448px;width:49px;height:18px;background:#c0c0c0;padding-left:1px;"><span style="letter-spacing:0.9px">中心u</span></div>
<div class="c p h" style="left:323px;top:448px;width:49px;height:18px;background:#c0c0c0;padding-left:1px;"><span style="letter-spacing:0.9px">中心v</span></div>
<div class="c v h" style="left:373px;top:448px;width:67px;height:18px;background:#c0c0c0;padding-left:4.6px;"><span>S</span></div>
<div class="c v h" style="left:441px;top:448px;width:91px;height:18px;background:#c0c0c0;padding-left:4.6px;"><span>Iu</span></div>
<div class="c v h" style="left:533px;top:448px;width:91px;height:18px;background:#c0c0c0;padding-left:4.6px;"><span>Iv</span></div>
<div class="c v h" style="left:625px;top:448px;width:91px;height:18px;background:#c0c0c0;padding-left:4.6px;"><span>Iuv</span></div>
<div class="c v h" style="left:717px;top:448px;width:91px;height:18px;background:#c0c0c0;padding-left:4.6px;"><span>Ixx</span></div>
<div class="c v h" style="left:809px;top:448px;width:91px;height:18px;background:#c0c0c0;padding-left:4.6px;"><span>Iyy</span></div>
<div class="c v h" style="left:901px;top:448px;width:91px;height:18px;background:#c0c0c0;padding-left:4.6px;"><span>Ixy</span></div>
<div class="c v" style="left:17px;top:467px;width:55px;height:18px;background:#c0c0c0;padding-left:20.5px;"><span>1</span></div>
<div class="c v" style="left:73px;top:467px;width:49px;height:18px;background:#ccffcc;padding-left:1px;"><span>0</span></div>
<div class="c v" style="left:123px;top:467px;width:49px;height:18px;background:#ccffcc;padding-left:1px;"><span>0</span></div>
<div class="c v" style="left:173px;top:467px;width:49px;height:18px;background:#ccffcc;padding-left:1px;"><span>0</span></div>
<div class="c v" style="left:223px;top:467px;width:49px;height:18px;background:#ccffcc;padding-left:1px;"><span>0</span></div>
<div class="c v" style="left:273px;top:467px;width:49px;height:18px;background:#ccffcc;padding-left:1px;"><span>0</span></div>
<div class="c v" style="left:323px;top:467px;width:49px;height:18px;background:#ccffcc;padding-left:1px;"><span>0</span></div>
<div class="c v" style="left:373px;top:467px;width:67px;height:18px;background:#ccccff;padding-left:1px;"><span>0</span></div>
<div class="c v" style="left:441px;top:467px;width:91px;height:18px;background:#ccccff;padding-left:1px;"><span>0</span></div>
<div class="c v" style="left:533px;top:467px;width:91px;height:18px;background:#ccccff;padding-left:1px;"><span>0</span></div>
<div class="c v" style="left:625px;top:467px;width:91px;height:18px;background:#ccccff;padding-left:1px;"><span>0</span></div>
<div class="c v" style="left:717px;top:467px;width:91px;height:18px;background:#ccccff;padding-left:1px;"><span>0</span></div>
<div class="c v" style="left:809px;top:467px;width:91px;height:18px;background:#ccccff;padding-left:1px;"><span>0</span></div>
<div class="c v" style="left:901px;top:467px;width:91px;height:18px;background:#ccccff;padding-left:1px;"><span>0</span></div>
<div class="c v" style="left:17px;top:486px;width:55px;height:18px;background:#c0c0c0;padding-left:20.5px;"><span>2</span></div>
<div class="c v" style="left:73px;top:486px;width:49px;height:18px;background:#ccffcc;padding-left:1px;"><span>0</span></div>
<div class="c v" style="left:123px;top:486px;width:49px;height:18px;background:#ccffcc;padding-left:1px;"><span>0</span></div>
<div class="c v" style="left:173px;top:486px;width:49px;height:18px;background:#ccffcc;padding-left:1px;"><span>0</span></div>
<div class="c v" style="left:223px;top:486px;width:49px;height:18px;background:#ccffcc;padding-left:1px;"><span>0</span></div>
<div class="c v" style="left:273px;top:486px;width:49px;height:18px;background:#ccffcc;padding-left:1px;"><span>0</span></div>
<div class="c v" style="left:323px;top:486px;width:49px;height:18px;background:#ccffcc;padding-left:1px;"><span>0</span></div>
<div class="c v" style="left:373px;top:486px;width:67px;height:18px;background:#ccccff;padding-left:1px;"><span>0</span></div>
<div class="c v" style="left:441px;top:486px;width:91px;height:18px;background:#ccccff;padding-left:1px;"><span>0</span></div>
<div class="c v" style="left:533px;top:486px;width:91px;height:18px;background:#ccccff;padding-left:1px;"><span>0</span></div>
<div class="c v" style="left:625px;top:486px;width:91px;height:18px;background:#ccccff;padding-left:1px;"><span>0</span></div>
<div class="c v" style="left:717px;top:486px;width:91px;height:18px;background:#ccccff;padding-left:1px;"><span>0</span></div>
<div class="c v" style="left:809px;top:486px;width:91px;height:18px;background:#ccccff;padding-left:1px;"><span>0</span></div>
<div class="c v" style="left:901px;top:486px;width:91px;height:18px;background:#ccccff;padding-left:1px;"><span>0</span></div>
<div class="c v" style="left:17px;top:505px;width:55px;height:18px;background:#c0c0c0;padding-left:20.5px;"><span>3</span></div>
<div class="c v" style="left:73px;top:505px;width:49px;height:18px;background:#ccffcc;padding-left:1px;"></div>
<div class="c v" style="left:123px;top:505px;width:49px;height:18px;background:#ccffcc;padding-left:1px;"></div>
<div class="c v" style="left:173px;top:505px;width:49px;height:18px;background:#ccffcc;padding-left:1px;"></div>
<div class="c v" style="left:223px;top:505px;width:49px;height:18px;background:#ccffcc;padding-left:1px;"></div>
<div class="c v" style="left:273px;top:505px;width:49px;height:18px;background:#ccffcc;padding-left:1px;"></div>
<div class="c v" style="left:323px;top:505px;width:49px;height:18px;background:#ccffcc;padding-left:1px;"></div>
<div class="c v" style="left:373px;top:505px;width:67px;height:18px;background:#ccccff;padding-left:1px;"></div>
<div class="c v" style="left:441px;top:505px;width:91px;height:18px;background:#ccccff;padding-left:1px;"></div>
<div class="c v" style="left:533px;top:505px;width:91px;height:18px;background:#ccccff;padding-left:1px;"></div>
<div class="c v" style="left:625px;top:505px;width:91px;height:18px;background:#ccccff;padding-left:1px;"></div>
<div class="c v" style="left:717px;top:505px;width:91px;height:18px;background:#ccccff;padding-left:1px;"></div>
<div class="c v" style="left:809px;top:505px;width:91px;height:18px;background:#ccccff;padding-left:1px;"></div>
<div class="c v" style="left:901px;top:505px;width:91px;height:18px;background:#ccccff;padding-left:1px;"></div>
<div class="c v" style="left:17px;top:524px;width:55px;height:18px;background:#c0c0c0;padding-left:20.5px;"><span>4</span></div>
<div class="c v" style="left:73px;top:524px;width:49px;height:18px;background:#ccffcc;padding-left:1px;"></div>
<div class="c v" style="left:123px;top:524px;width:49px;height:18px;background:#ccffcc;padding-left:1px;"></div>
<div class="c v" style="left:173px;top:524px;width:49px;height:18px;background:#ccffcc;padding-left:1px;"></div>
<div class="c v" style="left:223px;top:524px;width:49px;height:18px;background:#ccffcc;padding-left:1px;"></div>
<div class="c v" style="left:273px;top:524px;width:49px;height:18px;background:#ccffcc;padding-left:1px;"></div>
<div class="c v" style="left:323px;top:524px;width:49px;height:18px;background:#ccffcc;padding-left:1px;"></div>
<div class="c v" style="left:373px;top:524px;width:67px;height:18px;background:#ccccff;padding-left:1px;"></div>
<div class="c v" style="left:441px;top:524px;width:91px;height:18px;background:#ccccff;padding-left:1px;"></div>
<div class="c v" style="left:533px;top:524px;width:91px;height:18px;background:#ccccff;padding-left:1px;"></div>
<div class="c v" style="left:625px;top:524px;width:91px;height:18px;background:#ccccff;padding-left:1px;"></div>
<div class="c v" style="left:717px;top:524px;width:91px;height:18px;background:#ccccff;padding-left:1px;"></div>
<div class="c v" style="left:809px;top:524px;width:91px;height:18px;background:#ccccff;padding-left:1px;"></div>
<div class="c v" style="left:901px;top:524px;width:91px;height:18px;background:#ccccff;padding-left:1px;"></div>
<div class="c v" style="left:17px;top:543px;width:55px;height:18px;background:#c0c0c0;padding-left:20.5px;"><span>5</span></div>
<div class="c v" style="left:73px;top:543px;width:49px;height:18px;background:#ccffcc;padding-left:1px;"></div>
<div class="c v" style="left:123px;top:543px;width:49px;height:18px;background:#ccffcc;padding-left:1px;"></div>
<div class="c v" style="left:173px;top:543px;width:49px;height:18px;background:#ccffcc;padding-left:1px;"></div>
<div class="c v" style="left:223px;top:543px;width:49px;height:18px;background:#ccffcc;padding-left:1px;"></div>
<div class="c v" style="left:273px;top:543px;width:49px;height:18px;background:#ccffcc;padding-left:1px;"></div>
<div class="c v" style="left:323px;top:543px;width:49px;height:18px;background:#ccffcc;padding-left:1px;"></div>
<div class="c v" style="left:373px;top:543px;width:67px;height:18px;background:#ccccff;padding-left:1px;"></div>
<div class="c v" style="left:441px;top:543px;width:91px;height:18px;background:#ccccff;padding-left:1px;"></div>
<div class="c v" style="left:533px;top:543px;width:91px;height:18px;background:#ccccff;padding-left:1px;"></div>
<div class="c v" style="left:625px;top:543px;width:91px;height:18px;background:#ccccff;padding-left:1px;"></div>
<div class="c v" style="left:717px;top:543px;width:91px;height:18px;background:#ccccff;padding-left:1px;"></div>
<div class="c v" style="left:809px;top:543px;width:91px;height:18px;background:#ccccff;padding-left:1px;"></div>
<div class="c v" style="left:901px;top:543px;width:91px;height:18px;background:#ccccff;padding-left:1px;"></div>
<div class="c v" style="left:17px;top:562px;width:55px;height:18px;background:#c0c0c0;padding-left:20.5px;"><span>6</span></div>
<div class="c v" style="left:73px;top:562px;width:49px;height:18px;background:#ccffcc;padding-left:1px;"></div>
<div class="c v" style="left:123px;top:562px;width:49px;height:18px;background:#ccffcc;padding-left:1px;"></div>
<div class="c v" style="left:173px;top:562px;width:49px;height:18px;background:#ccffcc;padding-left:1px;"></div>
<div class="c v" style="left:223px;top:562px;width:49px;height:18px;background:#ccffcc;padding-left:1px;"></div>
<div class="c v" style="left:273px;top:562px;width:49px;height:18px;background:#ccffcc;padding-left:1px;"></div>
<div class="c v" style="left:323px;top:562px;width:49px;height:18px;background:#ccffcc;padding-left:1px;"></div>
<div class="c v" style="left:373px;top:562px;width:67px;height:18px;background:#ccccff;padding-left:1px;"></div>
<div class="c v" style="left:441px;top:562px;width:91px;height:18px;background:#ccccff;padding-left:1px;"></div>
<div class="c v" style="left:533px;top:562px;width:91px;height:18px;background:#ccccff;padding-left:1px;"></div>
<div class="c v" style="left:625px;top:562px;width:91px;height:18px;background:#ccccff;padding-left:1px;"></div>
<div class="c v" style="left:717px;top:562px;width:91px;height:18px;background:#ccccff;padding-left:1px;"></div>
<div class="c v" style="left:809px;top:562px;width:91px;height:18px;background:#ccccff;padding-left:1px;"></div>
<div class="c v" style="left:901px;top:562px;width:91px;height:18px;background:#ccccff;padding-left:1px;"></div>
<div class="c v" style="left:17px;top:581px;width:55px;height:18px;background:#c0c0c0;padding-left:20.5px;"><span>7</span></div>
<div class="c v" style="left:73px;top:581px;width:49px;height:18px;background:#ccffcc;padding-left:1px;"></div>
<div class="c v" style="left:123px;top:581px;width:49px;height:18px;background:#ccffcc;padding-left:1px;"></div>
<div class="c v" style="left:173px;top:581px;width:49px;height:18px;background:#ccffcc;padding-left:1px;"></div>
<div class="c v" style="left:223px;top:581px;width:49px;height:18px;background:#ccffcc;padding-left:1px;"></div>
<div class="c v" style="left:273px;top:581px;width:49px;height:18px;background:#ccffcc;padding-left:1px;"></div>
<div class="c v" style="left:323px;top:581px;width:49px;height:18px;background:#ccffcc;padding-left:1px;"></div>
<div class="c v" style="left:373px;top:581px;width:67px;height:18px;background:#ccccff;padding-left:1px;"></div>
<div class="c v" style="left:441px;top:581px;width:91px;height:18px;background:#ccccff;padding-left:1px;"></div>
<div class="c v" style="left:533px;top:581px;width:91px;height:18px;background:#ccccff;padding-left:1px;"></div>
<div class="c v" style="left:625px;top:581px;width:91px;height:18px;background:#ccccff;padding-left:1px;"></div>
<div class="c v" style="left:717px;top:581px;width:91px;height:18px;background:#ccccff;padding-left:1px;"></div>
<div class="c v" style="left:809px;top:581px;width:91px;height:18px;background:#ccccff;padding-left:1px;"></div>
<div class="c v" style="left:901px;top:581px;width:91px;height:18px;background:#ccccff;padding-left:1px;"></div>
<div class="c v" style="left:17px;top:600px;width:55px;height:18px;background:#c0c0c0;padding-left:20.5px;"><span>8</span></div>
<div class="c v" style="left:73px;top:600px;width:49px;height:18px;background:#ccffcc;padding-left:1px;"></div>
<div class="c v" style="left:123px;top:600px;width:49px;height:18px;background:#ccffcc;padding-left:1px;"></div>
<div class="c v" style="left:173px;top:600px;width:49px;height:18px;background:#ccffcc;padding-left:1px;"></div>
<div class="c v" style="left:223px;top:600px;width:49px;height:18px;background:#ccffcc;padding-left:1px;"></div>
<div class="c v" style="left:273px;top:600px;width:49px;height:18px;background:#ccffcc;padding-left:1px;"></div>
<div class="c v" style="left:323px;top:600px;width:49px;height:18px;background:#ccffcc;padding-left:1px;"></div>
<div class="c v" style="left:373px;top:600px;width:67px;height:18px;background:#ccccff;padding-left:1px;"></div>
<div class="c v" style="left:441px;top:600px;width:91px;height:18px;background:#ccccff;padding-left:1px;"></div>
<div class="c v" style="left:533px;top:600px;width:91px;height:18px;background:#ccccff;padding-left:1px;"></div>
<div class="c v" style="left:625px;top:600px;width:91px;height:18px;background:#ccccff;padding-left:1px;"></div>
<div class="c v" style="left:717px;top:600px;width:91px;height:18px;background:#ccccff;padding-left:1px;"></div>
<div class="c v" style="left:809px;top:600px;width:91px;height:18px;background:#ccccff;padding-left:1px;"></div>
<div class="c v" style="left:901px;top:600px;width:91px;height:18px;background:#ccccff;padding-left:1px;"></div>
<div class="c p h" style="left:17px;top:623px;width:55px;height:18px;background:#c0c0c0;padding-left:1px;"><span style="letter-spacing:0.9px">三角形</span></div>
<div class="c p h" style="left:73px;top:623px;width:49px;height:18px;background:#c0c0c0;padding-left:1px;"><span style="letter-spacing:0.3px">辺(始)a</span></div>
<div class="c p h" style="left:123px;top:623px;width:49px;height:18px;background:#c0c0c0;padding-left:1px;"><span style="letter-spacing:0.3px">辺(終)b</span></div>
<div class="c p h" style="left:173px;top:623px;width:49px;height:18px;background:#c0c0c0;padding-left:1px;"><span style="letter-spacing:0.9px">挟角θ</span></div>
<div class="c p h" style="left:223px;top:623px;width:49px;height:18px;background:#c0c0c0;padding-left:1px;"><span style="letter-spacing:0.9px">傾角i</span></div>
<div class="c p h" style="left:273px;top:623px;width:49px;height:18px;background:#c0c0c0;padding-left:1px;"><span style="letter-spacing:0.9px">θ点u</span></div>
<div class="c p h" style="left:323px;top:623px;width:49px;height:18px;background:#c0c0c0;padding-left:1px;"><span style="letter-spacing:0.9px">θ点v</span></div>
<div class="c v h" style="left:373px;top:623px;width:67px;height:18px;background:#c0c0c0;padding-left:4.6px;"><span>S</span></div>
<div class="c v h" style="left:441px;top:623px;width:91px;height:18px;background:#c0c0c0;padding-left:4.6px;"><span>Iu</span></div>
<div class="c v h" style="left:533px;top:623px;width:91px;height:18px;background:#c0c0c0;padding-left:4.6px;"><span>Iv</span></div>
<div class="c v h" style="left:625px;top:623px;width:91px;height:18px;background:#c0c0c0;padding-left:4.6px;"><span>Iuv</span></div>
<div class="c v h" style="left:717px;top:623px;width:91px;height:18px;background:#c0c0c0;padding-left:4.6px;"><span>Ixx</span></div>
<div class="c v h" style="left:809px;top:623px;width:91px;height:18px;background:#c0c0c0;padding-left:4.6px;"><span>Iyy</span></div>
<div class="c v h" style="left:901px;top:623px;width:91px;height:18px;background:#c0c0c0;padding-left:4.6px;"><span>Ixy</span></div>
<div class="c v" style="left:17px;top:642px;width:55px;height:18px;background:#c0c0c0;padding-left:20.5px;"><span>1</span></div>
<div class="c v" style="left:73px;top:642px;width:49px;height:18px;background:#ccffcc;padding-left:1px;"><span>0</span></div>
<div class="c v" style="left:123px;top:642px;width:49px;height:18px;background:#ccffcc;padding-left:1px;"><span>0</span></div>
<div class="c v" style="left:173px;top:642px;width:49px;height:18px;background:#ccffcc;padding-left:1px;"><span>0</span></div>
<div class="c v" style="left:223px;top:642px;width:49px;height:18px;background:#ccffcc;padding-left:1px;"><span>0</span></div>
<div class="c v" style="left:273px;top:642px;width:49px;height:18px;background:#ccffcc;padding-left:1px;"><span>0</span></div>
<div class="c v" style="left:323px;top:642px;width:49px;height:18px;background:#ccffcc;padding-left:1px;"><span>0</span></div>
<div class="c v" style="left:373px;top:642px;width:67px;height:18px;background:#ccccff;padding-left:1px;"><span>0</span></div>
<div class="c v" style="left:441px;top:642px;width:91px;height:18px;background:#ccccff;padding-left:1px;"><span>0</span></div>
<div class="c v" style="left:533px;top:642px;width:91px;height:18px;background:#ccccff;padding-left:1px;"><span>0</span></div>
<div class="c v" style="left:625px;top:642px;width:91px;height:18px;background:#ccccff;padding-left:1px;"><span>0</span></div>
<div class="c v" style="left:717px;top:642px;width:91px;height:18px;background:#ccccff;padding-left:1px;"><span>0</span></div>
<div class="c v" style="left:809px;top:642px;width:91px;height:18px;background:#ccccff;padding-left:1px;"><span>0</span></div>
<div class="c v" style="left:901px;top:642px;width:91px;height:18px;background:#ccccff;padding-left:1px;"><span>0</span></div>
<div class="c v" style="left:17px;top:661px;width:55px;height:18px;background:#c0c0c0;padding-left:20.5px;"><span>2</span></div>
<div class="c v" style="left:73px;top:661px;width:49px;height:18px;background:#ccffcc;padding-left:1px;"><span>0</span></div>
<div class="c v" style="left:123px;top:661px;width:49px;height:18px;background:#ccffcc;padding-left:1px;"><span>0</span></div>
<div class="c v" style="left:173px;top:661px;width:49px;height:18px;background:#ccffcc;padding-left:1px;"><span>0</span></div>
<div class="c v" style="left:223px;top:661px;width:49px;height:18px;background:#ccffcc;padding-left:1px;"><span>0</span></div>
<div class="c v" style="left:273px;top:661px;width:49px;height:18px;background:#ccffcc;padding-left:1px;"><span>0</span></div>
<div class="c v" style="left:323px;top:661px;width:49px;height:18px;background:#ccffcc;padding-left:1px;"><span>0</span></div>
<div class="c v" style="left:373px;top:661px;width:67px;height:18px;background:#ccccff;padding-left:1px;"><span>0</span></div>
<div class="c v" style="left:441px;top:661px;width:91px;height:18px;background:#ccccff;padding-left:1px;"><span>0</span></div>
<div class="c v" style="left:533px;top:661px;width:91px;height:18px;background:#ccccff;padding-left:1px;"><span>0</span></div>
<div class="c v" style="left:625px;top:661px;width:91px;height:18px;background:#ccccff;padding-left:1px;"><span>0</span></div>
<div class="c v" style="left:717px;top:661px;width:91px;height:18px;background:#ccccff;padding-left:1px;"><span>0</span></div>
<div class="c v" style="left:809px;top:661px;width:91px;height:18px;background:#ccccff;padding-left:1px;"><span>0</span></div>
<div class="c v" style="left:901px;top:661px;width:91px;height:18px;background:#ccccff;padding-left:1px;"><span>0</span></div>
<div class="c v" style="left:17px;top:680px;width:55px;height:18px;background:#c0c0c0;padding-left:20.5px;"><span>3</span></div>
<div class="c v" style="left:73px;top:680px;width:49px;height:18px;background:#ccffcc;padding-left:1px;"></div>
<div class="c v" style="left:123px;top:680px;width:49px;height:18px;background:#ccffcc;padding-left:1px;"></div>
<div class="c v" style="left:173px;top:680px;width:49px;height:18px;background:#ccffcc;padding-left:1px;"></div>
<div class="c v" style="left:223px;top:680px;width:49px;height:18px;background:#ccffcc;padding-left:1px;"></div>
<div class="c v" style="left:273px;top:680px;width:49px;height:18px;background:#ccffcc;padding-left:1px;"></div>
<div class="c v" style="left:323px;top:680px;width:49px;height:18px;background:#ccffcc;padding-left:1px;"></div>
<div class="c v" style="left:373px;top:680px;width:67px;height:18px;background:#ccccff;padding-left:1px;"></div>
<div class="c v" style="left:441px;top:680px;width:91px;height:18px;background:#ccccff;padding-left:1px;"></div>
<div class="c v" style="left:533px;top:680px;width:91px;height:18px;background:#ccccff;padding-left:1px;"></div>
<div class="c v" style="left:625px;top:680px;width:91px;height:18px;background:#ccccff;padding-left:1px;"></div>
<div class="c v" style="left:717px;top:680px;width:91px;height:18px;background:#ccccff;padding-left:1px;"></div>
<div class="c v" style="left:809px;top:680px;width:91px;height:18px;background:#ccccff;padding-left:1px;"></div>
<div class="c v" style="left:901px;top:680px;width:91px;height:18px;background:#ccccff;padding-left:1px;"></div>
<div class="c p h" style="left:17px;top:703px;width:55px;height:18px;background:#c0c0c0;padding-left:1px;"><span style="letter-spacing:0.9px">楕円(弓)</span></div>
<div class="c p h" style="left:73px;top:703px;width:49px;height:18px;background:#c0c0c0;padding-left:1px;"><span style="letter-spacing:0.9px">横径2a</span></div>
<div class="c p h" style="left:123px;top:703px;width:49px;height:18px;background:#c0c0c0;padding-left:1px;"><span style="letter-spacing:0.9px">縦径2b</span></div>
<div class="c p h" style="left:173px;top:703px;width:49px;height:18px;background:#c0c0c0;padding-left:1px;"><span style="letter-spacing:0.9px">厚みh</span></div>
<div class="c p h" style="left:223px;top:703px;width:49px;height:18px;background:#c0c0c0;padding-left:1px;"><span style="letter-spacing:0.9px">傾角i</span></div>
<div class="c p h" style="left:273px;top:703px;width:49px;height:18px;background:#c0c0c0;padding-left:1px;"><span style="letter-spacing:0.9px">中心u</span></div>
<div class="c p h" style="left:323px;top:703px;width:49px;height:18px;background:#c0c0c0;padding-left:1px;"><span style="letter-spacing:0.9px">中心v</span></div>
<div class="c v h" style="left:373px;top:703px;width:67px;height:18px;background:#c0c0c0;padding-left:4.6px;"><span>S</span></div>
<div class="c v h" style="left:441px;top:703px;width:91px;height:18px;background:#c0c0c0;padding-left:4.6px;"><span>Iu</span></div>
<div class="c v h" style="left:533px;top:703px;width:91px;height:18px;background:#c0c0c0;padding-left:4.6px;"><span>Iv</span></div>
<div class="c v h" style="left:625px;top:703px;width:91px;height:18px;background:#c0c0c0;padding-left:4.6px;"><span>Iuv</span></div>
<div class="c v h" style="left:717px;top:703px;width:91px;height:18px;background:#c0c0c0;padding-left:4.6px;"><span>Ixx</span></div>
<div class="c v h" style="left:809px;top:703px;width:91px;height:18px;background:#c0c0c0;padding-left:4.6px;"><span>Iyy</span></div>
<div class="c v h" style="left:901px;top:703px;width:91px;height:18px;background:#c0c0c0;padding-left:4.6px;"><span>Ixy</span></div>
<div class="c v" style="left:17px;top:722px;width:55px;height:18px;background:#c0c0c0;padding-left:20.5px;"><span>1</span></div>
<div class="c v" style="left:73px;top:722px;width:49px;height:18px;background:#ccffcc;padding-left:1px;"><span>0</span></div>
<div class="c v" style="left:123px;top:722px;width:49px;height:18px;background:#ccffcc;padding-left:1px;"><span>0</span></div>
<div class="c v" style="left:173px;top:722px;width:49px;height:18px;background:#ccffcc;padding-left:1px;"><span>0</span></div>
<div class="c v" style="left:223px;top:722px;width:49px;height:18px;background:#ccffcc;padding-left:1px;"><span>0</span></div>
<div class="c v" style="left:273px;top:722px;width:49px;height:18px;background:#ccffcc;padding-left:1px;"><span>0</span></div>
<div class="c v" style="left:323px;top:722px;width:49px;height:18px;background:#ccffcc;padding-left:1px;"><span>0</span></div>
<div class="c v" style="left:373px;top:722px;width:67px;height:18px;background:#ccccff;padding-left:1px;"><span>0</span></div>
<div class="c v" style="left:441px;top:722px;width:91px;height:18px;background:#ccccff;padding-left:1px;"><span>0</span></div>
<div class="c v" style="left:533px;top:722px;width:91px;height:18px;background:#ccccff;padding-left:1px;"><span>0</span></div>
<div class="c v" style="left:625px;top:722px;width:91px;height:18px;background:#ccccff;padding-left:1px;"><span>0</span></div>
<div class="c v" style="left:717px;top:722px;width:91px;height:18px;background:#ccccff;padding-left:1px;"><span>0</span></div>
<div class="c v" style="left:809px;top:722px;width:91px;height:18px;background:#ccccff;padding-left:1px;"><span>0</span></div>
<div class="c v" style="left:901px;top:722px;width:91px;height:18px;background:#ccccff;padding-left:1px;"><span>0</span></div>
<div class="c v" style="left:17px;top:741px;width:55px;height:18px;background:#c0c0c0;padding-left:20.5px;"><span>2</span></div>
<div class="c v" style="left:73px;top:741px;width:49px;height:18px;background:#ccffcc;padding-left:1px;"><span>0</span></div>
<div class="c v" style="left:123px;top:741px;width:49px;height:18px;background:#ccffcc;padding-left:1px;"><span>0</span></div>
<div class="c v" style="left:173px;top:741px;width:49px;height:18px;background:#ccffcc;padding-left:1px;"><span>0</span></div>
<div class="c v" style="left:223px;top:741px;width:49px;height:18px;background:#ccffcc;padding-left:1px;"><span>0</span></div>
<div class="c v" style="left:273px;top:741px;width:49px;height:18px;background:#ccffcc;padding-left:1px;"><span>0</span></div>
<div class="c v" style="left:323px;top:741px;width:49px;height:18px;background:#ccffcc;padding-left:1px;"><span>0</span></div>
<div class="c v" style="left:373px;top:741px;width:67px;height:18px;background:#ccccff;padding-left:1px;"><span>0</span></div>
<div class="c v" style="left:441px;top:741px;width:91px;height:18px;background:#ccccff;padding-left:1px;"><span>0</span></div>
<div class="c v" style="left:533px;top:741px;width:91px;height:18px;background:#ccccff;padding-left:1px;"><span>0</span></div>
<div class="c v" style="left:625px;top:741px;width:91px;height:18px;background:#ccccff;padding-left:1px;"><span>0</span></div>
<div class="c v" style="left:717px;top:741px;width:91px;height:18px;background:#ccccff;padding-left:1px;"><span>0</span></div>
<div class="c v" style="left:809px;top:741px;width:91px;height:18px;background:#ccccff;padding-left:1px;"><span>0</span></div>
<div class="c v" style="left:901px;top:741px;width:91px;height:18px;background:#ccccff;padding-left:1px;"><span>0</span></div>
<div class="c v" style="left:17px;top:760px;width:55px;height:3px;background:#c0c0c0;padding-left:20.5px;"><span>3</span></div>
<div class="c v" style="left:73px;top:760px;width:49px;height:3px;background:#ccffcc;padding-left:1px;"></div>
<div class="c v" style="left:123px;top:760px;width:49px;height:3px;background:#ccffcc;padding-left:1px;"></div>
<div class="c v" style="left:173px;top:760px;width:49px;height:3px;background:#ccffcc;padding-left:1px;"></div>
<div class="c v" style="left:223px;top:760px;width:49px;height:3px;background:#ccffcc;padding-left:1px;"></div>
<div class="c v" style="left:273px;top:760px;width:49px;height:3px;background:#ccffcc;padding-left:1px;"></div>
<div class="c v" style="left:323px;top:760px;width:49px;height:3px;background:#ccffcc;padding-left:1px;"></div>
<div class="c v" style="left:373px;top:760px;width:67px;height:3px;background:#ccccff;padding-left:1px;"></div>
<div class="c v" style="left:441px;top:760px;width:91px;height:3px;background:#ccccff;padding-left:1px;"></div>
<div class="c v" style="left:533px;top:760px;width:91px;height:3px;background:#ccccff;padding-left:1px;"></div>
<div class="c v" style="left:625px;top:760px;width:91px;height:3px;background:#ccccff;padding-left:1px;"></div>
<div class="c v" style="left:717px;top:760px;width:91px;height:3px;background:#ccccff;padding-left:1px;"></div>
<div class="c v" style="left:809px;top:760px;width:91px;height:3px;background:#ccccff;padding-left:1px;"></div>
<div class="c v" style="left:901px;top:760px;width:91px;height:3px;background:#ccccff;padding-left:1px;"></div>
<div class="a" style="left:751px;top:195px;width:26px;height:1px;background:#f00"></div>
<div class="a" style="left:21px;top:213px;width:40px;height:1px;background:#f00"></div>
  <!-- white annotation overlays -->
  <svg class="a" style="left:0;top:0;pointer-events:none" width="1024" height="768" viewBox="0 0 1024 768">
    <g fill="none" stroke="#fff" stroke-width="2" stroke-linejoin="miter">
      <path d="M98 102.300L105.400 110H150.600L158 102.300"/>
      <path d="M63 219V442"/>
      <path d="M58.800 237.500L63 218.500L67.200 237.500"/>
      <path d="M58.800 423.500L63 442.500L67.200 423.500"/>
    </g>
    <path d="M63 218l3 12h-6z" fill="#fff"/>
    <path d="M63 443l3-12h-6z" fill="#fff"/>
  </svg>
  <div class="a" style="left:126px;top:109px;width:2px;height:110px;background:#fff"></div>
  <div class="a" style="left:127px;top:219px;width:2px;height:110px;background:#fff"></div>
  <div class="a" style="left:91px;top:327px;width:38px;height:2px;background:#fff"></div>
  <div class="a" style="left:70px;top:309px;width:21px;height:45px;background:#fff;font-size:17px;line-height:16px;padding:6px 0 0 2px;overflow:hidden">伸<br>縮</div>
  <!-- vertical scrollbar -->
  <div class="a" style="left:1007px;top:110px;width:16px;height:653px;background:#e0e0e0;background-image:repeating-conic-gradient(#fff 0 25%,#c0c0c0 0 50%);background-size:2px 2px"></div>
  <div class="a sbb" style="left:1007px;top:110px;height:16px"><svg width="16" height="16" viewBox="0 0 16 16"><path d="M4 10h7l-3.500-4z" fill="#000"/></svg></div>
  <div class="a sbb" style="left:1007px;top:126px;height:520px"></div>
  <div class="a sbb" style="left:1007px;top:747px;height:16px"><svg width="16" height="16" viewBox="0 0 16 16"><path d="M4 6h7l-3.500 4z" fill="#000"/></svg></div>
</div></div>
<style>
.bx{top:85px;height:22px;border-top:1px solid #808080;border-left:1px solid #808080;border-right:1px solid #fff;}
.tx{top:90px;height:12px;line-height:12px;font-size:12px;white-space:nowrap;}
.sbb{width:16px;background:#c0c0c0;box-shadow:inset -1px -1px 0 #000,inset 1px 1px 0 #c0c0c0,inset -2px -2px 0 #808080,inset 2px 2px 0 #fff;}
.sbb svg{display:block;}
.ru2{border-bottom:1px solid #f00;}
</style>
</body>
</html>
